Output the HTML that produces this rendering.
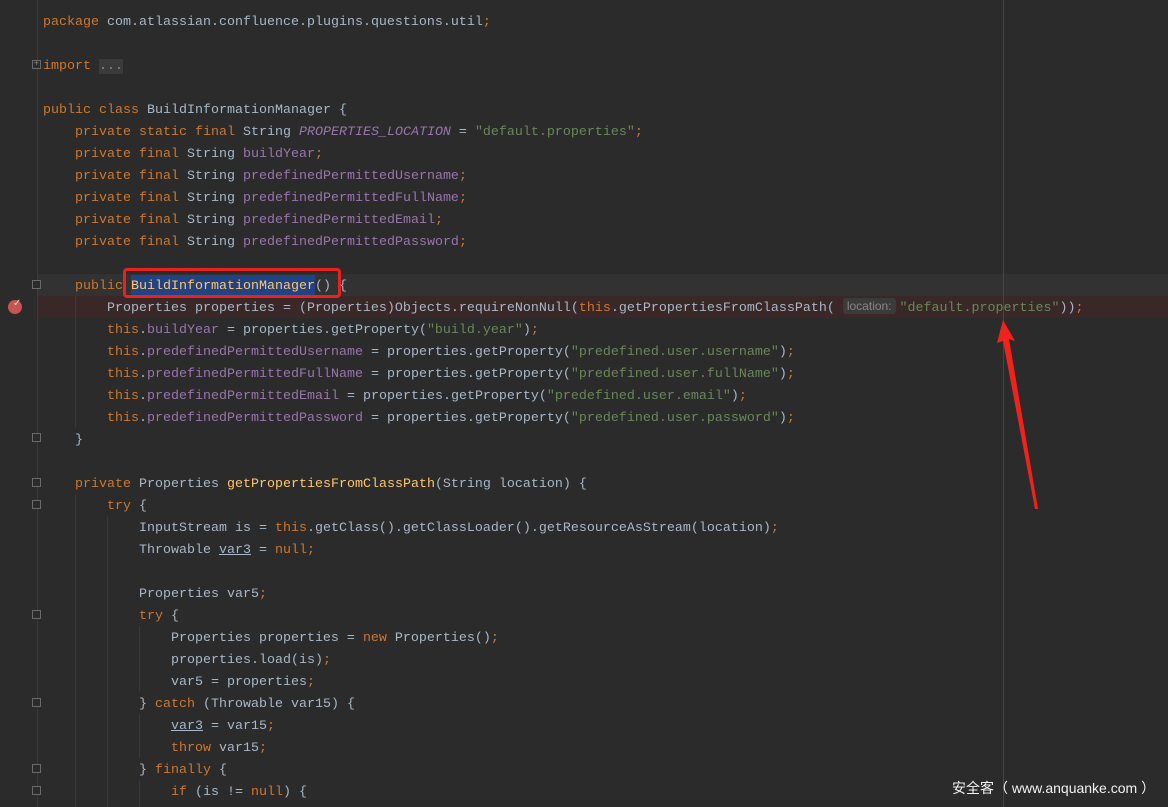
<!DOCTYPE html>
<html><head><meta charset="utf-8"><style>
html,body{margin:0;padding:0;background:#2b2b2b;width:1168px;height:807px;overflow:hidden;position:relative}
.code{position:absolute;left:43px;top:12px;font-family:"Liberation Mono",monospace;font-size:13.33px;color:#a9b7c6}
.l{height:22px;line-height:22px;white-space:pre;overflow:visible}
.k{color:#cc7832}.f{color:#9876aa}.s{color:#6a8759}.m{color:#ffc66d}.i{font-style:italic}.u{text-decoration:underline}
.hint{font-family:"Liberation Sans",sans-serif;font-size:12px;line-height:14px;color:#878787;background:#3b3b3b;border-radius:3px;padding:1px 4px;margin-right:4px;display:inline-block;vertical-align:1px}
.fold{position:absolute;left:32px;width:9px;height:9px;border:1px solid #6a6a6a;box-sizing:border-box;background:#2b2b2b}
.g{position:absolute;width:1px;background:#393939}
</style></head><body>
<div style="position:absolute;left:37px;top:0;width:1px;height:807px;background:#3a3a3a"></div>
<div style="position:absolute;left:38px;top:274px;width:1130px;height:22px;background:#323232"></div>
<div style="position:absolute;left:38px;top:296px;width:1130px;height:22px;background:#3a2727"></div>
<div style="position:absolute;left:1003px;top:0;width:1px;height:807px;background:#444"></div>
<div style="position:absolute;left:131px;top:275px;width:184px;height:20px;background:#214283"></div>
<div class="g" style="left:75px;top:296px;height:132px"></div>
<div class="g" style="left:75px;top:494px;height:313px"></div>
<div class="g" style="left:107px;top:516px;height:291px"></div>
<div class="g" style="left:139px;top:626px;height:66px"></div>
<div class="g" style="left:139px;top:714px;height:44px"></div>
<div class="g" style="left:139px;top:780px;height:27px"></div>
<div class="fold" style="top:60px;text-align:center;line-height:7px;font-size:9px;color:#888;font-family:'Liberation Mono'">+</div>
<div class="fold" style="top:280px"></div>
<div class="fold" style="top:433px"></div>
<div class="fold" style="top:478px"></div>
<div class="fold" style="top:500px"></div>
<div class="fold" style="top:610px"></div>
<div class="fold" style="top:698px"></div>
<div class="fold" style="top:764px"></div>
<div class="fold" style="top:786px"></div>
<div style="position:absolute;left:8px;top:300px;width:14px;height:14px;border-radius:50%;background:#c75450"></div>
<div style="position:absolute;left:13px;top:298px;color:#ddd;font-size:10px;font-family:'DejaVu Sans'">✓</div>
<div class="code">
<div class="l"><span class="k">package</span> com.atlassian.confluence.plugins.questions.util<span class="k">;</span></div>
<div class="l"></div>
<div class="l"><span class="k">import</span> <span style="background:#3b3b3b;color:#888">...</span></div>
<div class="l"></div>
<div class="l"><span class="k">public class</span> BuildInformationManager {</div>
<div class="l">    <span class="k">private static final</span> String <span class="f i">PROPERTIES_LOCATION</span> = <span class="s">"default.properties"</span><span class="k">;</span></div>
<div class="l">    <span class="k">private final</span> String <span class="f">buildYear</span><span class="k">;</span></div>
<div class="l">    <span class="k">private final</span> String <span class="f">predefinedPermittedUsername</span><span class="k">;</span></div>
<div class="l">    <span class="k">private final</span> String <span class="f">predefinedPermittedFullName</span><span class="k">;</span></div>
<div class="l">    <span class="k">private final</span> String <span class="f">predefinedPermittedEmail</span><span class="k">;</span></div>
<div class="l">    <span class="k">private final</span> String <span class="f">predefinedPermittedPassword</span><span class="k">;</span></div>
<div class="l"></div>
<div class="l">    <span class="k">public</span> <span class="m">BuildInformationManager</span>() {</div>
<div class="l">        Properties properties = (Properties)Objects.requireNonNull(<span class="k">this</span>.getPropertiesFromClassPath( <span class="hint">location:</span><span class="s">"default.properties"</span>))<span class="k">;</span></div>
<div class="l">        <span class="k">this</span>.<span class="f">buildYear</span> = properties.getProperty(<span class="s">"build.year"</span>)<span class="k">;</span></div>
<div class="l">        <span class="k">this</span>.<span class="f">predefinedPermittedUsername</span> = properties.getProperty(<span class="s">"predefined.user.username"</span>)<span class="k">;</span></div>
<div class="l">        <span class="k">this</span>.<span class="f">predefinedPermittedFullName</span> = properties.getProperty(<span class="s">"predefined.user.fullName"</span>)<span class="k">;</span></div>
<div class="l">        <span class="k">this</span>.<span class="f">predefinedPermittedEmail</span> = properties.getProperty(<span class="s">"predefined.user.email"</span>)<span class="k">;</span></div>
<div class="l">        <span class="k">this</span>.<span class="f">predefinedPermittedPassword</span> = properties.getProperty(<span class="s">"predefined.user.password"</span>)<span class="k">;</span></div>
<div class="l">    }</div>
<div class="l"></div>
<div class="l">    <span class="k">private</span> Properties <span class="m">getPropertiesFromClassPath</span>(String location) {</div>
<div class="l">        <span class="k">try</span> {</div>
<div class="l">            InputStream is = <span class="k">this</span>.getClass().getClassLoader().getResourceAsStream(location)<span class="k">;</span></div>
<div class="l">            Throwable <span class="u">var3</span> = <span class="k">null;</span></div>
<div class="l"></div>
<div class="l">            Properties var5<span class="k">;</span></div>
<div class="l">            <span class="k">try</span> {</div>
<div class="l">                Properties properties = <span class="k">new</span> Properties()<span class="k">;</span></div>
<div class="l">                properties.load(is)<span class="k">;</span></div>
<div class="l">                var5 = properties<span class="k">;</span></div>
<div class="l">            } <span class="k">catch</span> (Throwable var15) {</div>
<div class="l">                <span class="u">var3</span> = var15<span class="k">;</span></div>
<div class="l">                <span class="k">throw</span> var15<span class="k">;</span></div>
<div class="l">            } <span class="k">finally</span> {</div>
<div class="l">                <span class="k">if</span> (is != <span class="k">null</span>) {</div>
</div>
<div style="position:absolute;left:123px;top:268px;width:212px;height:24px;border:3px solid #e8231f;border-radius:4px"></div>
<svg style="position:absolute;left:0;top:0" width="1168" height="807"><polygon points="1003,320 1015,341 1009,339 1038,509 1035,509 1003,341 997,343" fill="#f0231c"/></svg>
<div style="position:absolute;left:952px;top:778px;font-family:'Liberation Sans','Noto Sans CJK SC',sans-serif;font-size:14px;color:#f2f2f2;white-space:pre">安全客（ www.anquanke.com ）</div>
</body></html>
